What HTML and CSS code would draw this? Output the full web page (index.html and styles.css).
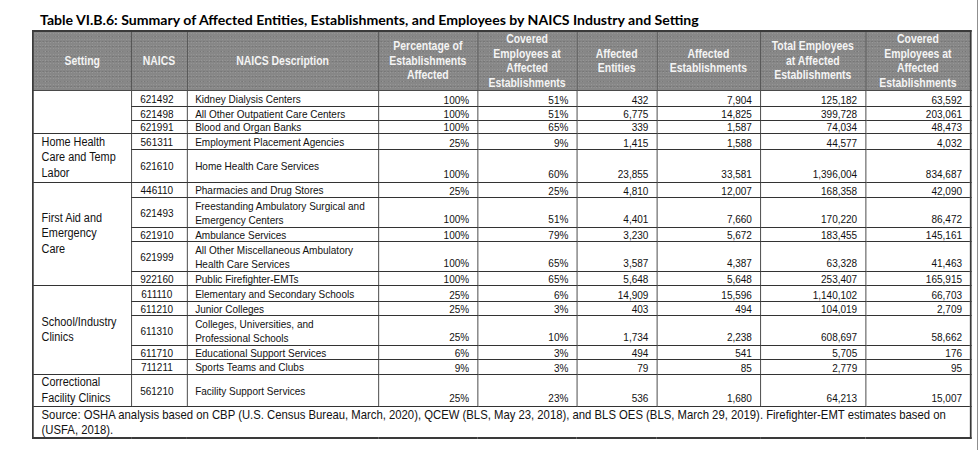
FILE: index.html
```html
<!DOCTYPE html>
<html>
<head>
<meta charset="utf-8">
<title>Table VI.B.6</title>
<link rel="stylesheet" href="styles.css">
</head>
<body>
<div class="page">
  <h1 class="title">Table VI.B.6: Summary of Affected Entities, Establishments, and Employees by NAICS Industry and Setting</h1>
  <table class="tbl">
    <colgroup>
      <col class="c-setting"><col class="c-naics"><col class="c-desc"><col class="c-pct"><col class="c-cov"><col class="c-ent"><col class="c-est"><col class="c-tot"><col class="c-cemp">
    </colgroup>
    <thead>
      <tr class="hdr">
        <th>Setting</th>
        <th>NAICS</th>
        <th>NAICS Description</th>
        <th>Percentage of<br>Establishments<br>Affected</th>
        <th>Covered<br>Employees at<br>Affected<br>Establishments</th>
        <th>Affected<br>Entities</th>
        <th>Affected<br>Establishments</th>
        <th>Total Employees<br>at Affected<br>Establishments</th>
        <th>Covered<br>Employees at<br>Affected<br>Establishments</th>
      </tr>
    </thead>
    <tbody>
      <tr class="h16">
        <td class="setting" rowspan="3"></td>
        <td class="naics">621492</td><td class="desc">Kidney Dialysis Centers</td>
        <td class="num">100%</td><td class="num">51%</td><td class="num">432</td><td class="num">7,904</td><td class="num">125,182</td><td class="num">63,592</td>
      </tr>
      <tr class="h14">
        <td class="naics">621498</td><td class="desc">All Other Outpatient Care Centers</td>
        <td class="num">100%</td><td class="num">51%</td><td class="num">6,775</td><td class="num">14,825</td><td class="num">399,728</td><td class="num">203,061</td>
      </tr>
      <tr class="h13">
        <td class="naics">621991</td><td class="desc">Blood and Organ Banks</td>
        <td class="num">100%</td><td class="num">65%</td><td class="num">339</td><td class="num">1,587</td><td class="num">74,034</td><td class="num">48,473</td>
      </tr>
      <tr class="h16">
        <td class="setting" rowspan="2">Home Health<br>Care and Temp<br>Labor</td>
        <td class="naics">561311</td><td class="desc">Employment Placement Agencies</td>
        <td class="num">25%</td><td class="num">9%</td><td class="num">1,415</td><td class="num">1,588</td><td class="num">44,577</td><td class="num">4,032</td>
      </tr>
      <tr class="h33">
        <td class="naics">621610</td><td class="desc">Home Health Care Services</td>
        <td class="num">100%</td><td class="num">60%</td><td class="num">23,855</td><td class="num">33,581</td><td class="num">1,396,004</td><td class="num">834,687</td>
      </tr>
      <tr class="h15">
        <td class="setting" rowspan="5">First Aid and<br>Emergency<br>Care</td>
        <td class="naics">446110</td><td class="desc">Pharmacies and Drug Stores</td>
        <td class="num">25%</td><td class="num">25%</td><td class="num">4,810</td><td class="num">12,007</td><td class="num">168,358</td><td class="num">42,090</td>
      </tr>
      <tr class="h30">
        <td class="naics">621493</td><td class="desc two">Freestanding Ambulatory Surgical and<br>Emergency Centers</td>
        <td class="num">100%</td><td class="num">51%</td><td class="num">4,401</td><td class="num">7,660</td><td class="num">170,220</td><td class="num">86,472</td>
      </tr>
      <tr class="h14">
        <td class="naics">621910</td><td class="desc">Ambulance Services</td>
        <td class="num">100%</td><td class="num">79%</td><td class="num">3,230</td><td class="num">5,672</td><td class="num">183,455</td><td class="num">145,161</td>
      </tr>
      <tr class="h30">
        <td class="naics">621999</td><td class="desc two">All Other Miscellaneous Ambulatory<br>Health Care Services</td>
        <td class="num">100%</td><td class="num">65%</td><td class="num">3,587</td><td class="num">4,387</td><td class="num">63,328</td><td class="num">41,463</td>
      </tr>
      <tr class="h14">
        <td class="naics">922160</td><td class="desc">Public Firefighter-EMTs</td>
        <td class="num">100%</td><td class="num">65%</td><td class="num">5,648</td><td class="num">5,648</td><td class="num">253,407</td><td class="num">165,915</td>
      </tr>
      <tr class="h16">
        <td class="setting" rowspan="5">School/Industry<br>Clinics</td>
        <td class="naics">611110</td><td class="desc">Elementary and Secondary Schools</td>
        <td class="num">25%</td><td class="num">6%</td><td class="num">14,909</td><td class="num">15,596</td><td class="num">1,140,102</td><td class="num">66,703</td>
      </tr>
      <tr class="h14">
        <td class="naics">611210</td><td class="desc">Junior Colleges</td>
        <td class="num">25%</td><td class="num">3%</td><td class="num">403</td><td class="num">494</td><td class="num">104,019</td><td class="num">2,709</td>
      </tr>
      <tr class="h30">
        <td class="naics">611310</td><td class="desc two">Colleges, Universities, and<br>Professional Schools</td>
        <td class="num">25%</td><td class="num">10%</td><td class="num">1,734</td><td class="num">2,238</td><td class="num">608,697</td><td class="num">58,662</td>
      </tr>
      <tr class="h14">
        <td class="naics">611710</td><td class="desc">Educational Support Services</td>
        <td class="num">6%</td><td class="num">3%</td><td class="num">494</td><td class="num">541</td><td class="num">5,705</td><td class="num">176</td>
      </tr>
      <tr class="h15">
        <td class="naics">711211</td><td class="desc">Sports Teams and Clubs</td>
        <td class="num">9%</td><td class="num">3%</td><td class="num">79</td><td class="num">85</td><td class="num">2,779</td><td class="num">95</td>
      </tr>
      <tr class="h32">
        <td class="setting">Correctional<br>Facility Clinics</td>
        <td class="naics">561210</td><td class="desc">Facility Support Services</td>
        <td class="num">25%</td><td class="num">23%</td><td class="num">536</td><td class="num">1,680</td><td class="num">64,213</td><td class="num">15,007</td>
      </tr>
    </tbody>
    <tfoot>
      <tr class="h31">
        <td class="source" colspan="9">Source: OSHA analysis based on CBP (U.S. Census Bureau, March, 2020), QCEW (BLS, May 23, 2018), and BLS OES (BLS, March 29, 2019). Firefighter-EMT estimates based on<br>(USFA, 2018).</td>
      </tr>
    </tfoot>
  </table>
</div>
</body>
</html>
```

FILE: styles.css
```css
html, body {
  margin: 0;
  padding: 0;
  background: #ffffff;
}

.page {
  width: 978px;
  height: 450px;
  box-sizing: border-box;
  border-right: 1px solid #8f8f8f;
  padding: 10px 0 0 32px;
  overflow: hidden;
}

.title {
  margin: 0 0 0 8px;
  height: 20px;
  font-family: Lato, "Open Sans", sans-serif;
  font-weight: bold;
  font-size: 14.1px;
  line-height: 20px;
  color: #000;
  white-space: nowrap;
}

/* The original uses a condensed face (Arial Narrow); it is emulated by
   laying the table out at full width and compressing it horizontally. */
.tbl {
  border-collapse: collapse;
  table-layout: fixed;
  width: 1078px;
  font-family: "Liberation Sans", Arial, sans-serif;
  font-size: 11.5px;
  color: #111;
  border: 2px solid #3a3a3a;
  transform: scaleX(0.87);
  transform-origin: 0 0;
}

.c-setting { width: 113px; }
.c-naics { width: 64px; }
.c-desc { width: 220px; }
.c-pct { width: 114px; }
.c-cov { width: 114px; }
.c-ent { width: 92px; }
.c-est { width: 119px; }
.c-tot { width: 121px; }
.c-cemp { width: 121px; }

.hdr { height: 59px; }

.tbl th {
  background-color: #878787;
  background-image:
    radial-gradient(rgba(255, 255, 255, 0.16) 0.7px, transparent 0.9px),
    radial-gradient(rgba(0, 0, 0, 0.12) 0.7px, transparent 0.9px);
  background-size: 3px 3px, 4px 5px;
  background-position: 0 0, 1px 2px;
  color: #f4f4f4;
  font-weight: bold;
  font-size: 12px;
  line-height: 14.5px;
  border: 1px solid #4a4a4a;
  padding: 0 2px;
  text-align: center;
  vertical-align: middle;
  white-space: nowrap;
}

.tbl td {
  border: 1px solid #333;
  padding: 0;
  line-height: 12px;
  white-space: nowrap;
}

.h13 { height: 13px; }
.h14 { height: 14px; }
.h15 { height: 15px; }
.h16 { height: 16px; }
.h30 { height: 30px; }
.h31 { height: 31px; }
.h32 { height: 32px; }
.h33 { height: 33px; }

.tbl td.setting {
  font-size: 12.5px;
  line-height: 15.5px;
  text-align: left;
  padding-left: 9px;
  vertical-align: middle;
}

.tbl td.naics {
  text-align: center;
  padding-right: 5px;
  vertical-align: middle;
}

.tbl td.desc {
  text-align: left;
  padding-left: 9px;
  vertical-align: middle;
}

.tbl td.desc.two {
  line-height: 14px;
}

.tbl td.num {
  text-align: right;
  padding-right: 9px;
  vertical-align: bottom;
}

.h30 td.num,
.h32 td.num,
.h33 td.num {
  padding-bottom: 2px;
}

.tbl td.source {
  font-size: 13px;
  line-height: 15px;
  padding: 0 9px;
  vertical-align: top;
  text-align: left;
}
```
